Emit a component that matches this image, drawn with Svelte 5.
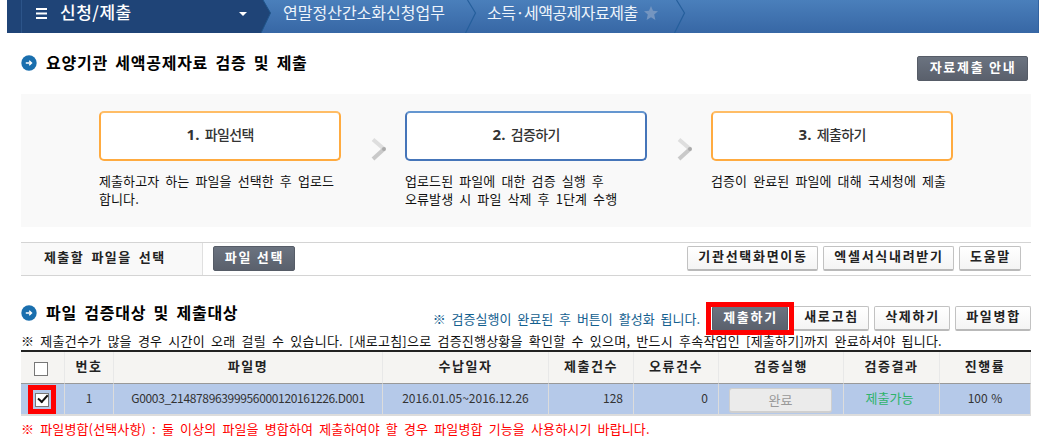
<script lang="ts">
  interface Step {
    no: number;
    title: string;
    lines: string[];
    tone: 'orange' | 'blue';
  }

  const steps: Step[] = [
    { no: 1, title: '파일선택', lines: ['제출하고자 하는 파일을 선택한 후 업로드', '합니다.'], tone: 'orange' },
    { no: 2, title: '검증하기', lines: ['업로드된 파일에 대한 검증 실행 후', '오류발생 시 파일 삭제 후 1단계 수행'], tone: 'blue' },
    { no: 3, title: '제출하기', lines: ['검증이 완료된 파일에 대해 국세청에 제출'], tone: 'orange' },
  ];

  const columns = [
    { label: '번호', width: 49 },
    { label: '파일명', width: 269 },
    { label: '수납일자', width: 166 },
    { label: '제출건수', width: 85 },
    { label: '오류건수', width: 85 },
    { label: '검증실행', width: 125 },
    { label: '검증결과', width: 96 },
    { label: '진행률', width: 91 },
  ];

  let allChecked = $state(false);
  let rowChecked = $state(true);
</script>

{#snippet bullet()}
  <svg class="bullet" width="16" height="16" viewBox="0 0 16 16" aria-hidden="true">
    <circle cx="8" cy="8" r="7.7" fill="#1a6fae" />
    <path d="M4.8 8h5.4M8.2 5.7L10.6 8 8.2 10.3" fill="none" stroke="#fff" stroke-width="1.3" />
  </svg>
{/snippet}

{#snippet divider()}
  <svg class="divider" width="12" height="33" viewBox="0 0 12 33" aria-hidden="true">
    <path d="M2.5 0L10.5 13 0.5 33" fill="none" stroke="#255f9c" stroke-width="1.2" />
  </svg>
{/snippet}

<div class="page">
  <nav class="topbar">
    <div class="menu">
      <svg width="11" height="11" viewBox="0 0 11 11" aria-hidden="true">
        <path d="M0 1h11M0 5.5h11M0 10h11" stroke="#fff" stroke-width="2" />
      </svg>
      <span>신청/제출</span>
      <svg class="caret" width="8" height="4" viewBox="0 0 8 4" aria-hidden="true">
        <path d="M0 0h8L4 4z" fill="#fff" />
      </svg>
    </div>
    <svg class="edge" width="10" height="33" viewBox="0 0 10 33" aria-hidden="true">
      <path d="M0 0H2L9.5 13 0 33z" fill="#1f4477" />
      <path d="M2 0L9.5 13 0 33" fill="none" stroke="#205489" />
    </svg>
    <span class="crumb first">연말정산간소화신청업무</span>
    {@render divider()}
    <span class="crumb second">소득·세액공제자료제출</span>
    <svg class="star" width="14" height="14" viewBox="0 0 14 14" aria-hidden="true">
      <path d="M7 0l2 4.8 5 .4-3.8 3.3L11.4 14 7 11.2 2.6 14 3.8 8.5 0 5.2l5-.4z" fill="#7495c0" />
    </svg>
    {@render divider()}
  </nav>

  <header class="title-row">
    {@render bullet()}
    <h2>요양기관 세액공제자료 검증 및 제출</h2>
    <button class="btn dark guide">자료제출 안내</button>
  </header>

  <section class="steps">
    {#each steps as step, i}
      {#if i > 0}
        <svg class="arrow" width="16" height="24" viewBox="0 0 16 24" aria-hidden="true">
          <path d="M2 2.5L13 12" stroke="#dedede" stroke-width="4" />
          <path d="M13 12L2 22" stroke="#c9c9c9" stroke-width="4" />
          <circle cx="13" cy="12" r="2" fill="#aaa" />
        </svg>
      {/if}
      <div class="step">
        <div class="step-box {step.tone}"><b>{step.no}.</b><span>{step.title}</span></div>
        {#each step.lines as line}
          <p>{line}</p>
        {/each}
      </div>
    {/each}
  </section>

  <section class="picker">
    <div class="picker-label">제출할 파일을 선택</div>
    <button class="btn dark pick">파일 선택</button>
    <div class="picker-actions">
      <button class="btn" style:width="131px">기관선택화면이동</button>
      <button class="btn" style:width="131px">엑셀서식내려받기</button>
      <button class="btn" style:width="62px">도움말</button>
    </div>
  </section>

  <header class="list-row">
    {@render bullet()}
    <h2>파일 검증대상 및 제출대상</h2>
    <span class="hint">※ 검증실행이 완료된 후 버튼이 활성화 됩니다.</span>
    <div class="list-actions">
      <div class="marked"><button class="btn dark">제출하기</button></div>
      <button class="btn">새로고침</button>
      <button class="btn">삭제하기</button>
      <button class="btn">파일병합</button>
    </div>
  </header>

  <p class="notice">※ 제출건수가 많을 경우 시간이 오래 걸릴 수 있습니다. [새로고침]으로 검증진행상황을 확인할 수 있으며, 반드시 후속작업인 [제출하기]까지 완료하셔야 됩니다.</p>

  <table>
    <colgroup>
      <col style:width="44px" />
      {#each columns as col}
        <col style:width="{col.width}px" />
      {/each}
    </colgroup>
    <thead>
      <tr>
        <th><input type="checkbox" aria-label="전체 선택" bind:checked={allChecked} /></th>
        {#each columns as col}
          <th>{col.label}</th>
        {/each}
      </tr>
    </thead>
    <tbody>
      <tr>
        <td><span class="marked-check"><input type="checkbox" aria-label="선택" bind:checked={rowChecked} /></span></td>
        <td>1</td>
        <td class="file">G0003_21487896399956000120161226.D001</td>
        <td class="date">2016.01.05~2016.12.26</td>
        <td class="num">128</td>
        <td class="num">0</td>
        <td><button class="done" disabled>완료</button></td>
        <td class="ok">제출가능</td>
        <td>100 %</td>
      </tr>
    </tbody>
  </table>

  <p class="footnote">※ 파일병합(선택사항) : 둘 이상의 파일을 병합하여 제출하여야 할 경우 파일병합 기능을 사용하시기 바랍니다.</p>
</div>

<style>
  :global(body) {
    background: #fff;
  }
  .page {
    width: 1045px;
    height: 447px;
    overflow: hidden;
    box-sizing: border-box;
    padding: 0 14px 0 21px;
    font: 13px/18px 'Noto Sans CJK KR', sans-serif;
    word-spacing: 3px;
    color: #111;
  }
  .page * {
    box-sizing: border-box;
  }
  button {
    font-family: inherit;
    word-spacing: inherit;
  }
  p,
  h2 {
    margin: 0;
    white-space: nowrap;
  }
  svg {
    display: block;
    flex: none;
  }

  .topbar {
    display: flex;
    height: 33px;
    margin: 0 -14px;
    width: 1032px;
    background: linear-gradient(#4a7fbb, #3767a5);
    border-right: 1px solid #3263a1;
    color: #eef4fb;
    font-size: 16px;
    line-height: 24px;
    white-space: nowrap;
  }
  .menu {
    display: flex;
    width: 254px;
    padding-left: 14px;
    background: linear-gradient(90deg, #1f4477 14px, #2c5489 14px, #2c5489 15px, #1f4477 15px);
    color: #fff;
    font-weight: 500;
    font-size: 17px;
    letter-spacing: 0.5px;
  }
  .menu svg:first-child {
    margin: 8px 13px 0 15px;
  }
  .menu .caret {
    margin: 12px 14px 0 auto;
  }
  .crumb.first {
    width: 183px;
    margin-left: 12px;
    margin-right: -1px;
  }
  .crumb.second {
    margin-left: 10px;
    width: 151px;
    letter-spacing: -0.5px;
  }
  .star {
    margin: 6px 16px 0 6px;
  }

  .title-row {
    display: flex;
    height: 61px;
    padding-top: 22px;
  }
  .bullet {
    margin: 0 9px 0 0;
  }
  h2 {
    margin-top: -1px;
    font-size: 16px;
    line-height: 16px;
    font-weight: 700;
    letter-spacing: 0.75px;
    color: #000;
  }
  .btn {
    height: 25px;
    padding: 0 0 4px;
    border: 1px solid #c2c2c2;
    border-bottom: 2px solid #b9b9b9;
    border-radius: 2px;
    background: linear-gradient(#fff, #f4f4f4);
    color: #222;
    font-size: 13px;
    line-height: 18px;
    font-weight: 700;
    letter-spacing: 1.7px;
    word-spacing: 0;
    text-indent: 1px;
    white-space: nowrap;
  }
  .btn.dark {
    border: 1px solid #565c67;
    background: linear-gradient(#6b7380, #5a606c);
    color: #fff;
  }
  .guide {
    width: 111px;
    margin: 1px 3px 0 auto;
  }

  .steps {
    display: flex;
    height: 133px;
    padding: 17px 0 0 77px;
    background: #f9f9f9;
  }
  .step {
    width: 243px;
    letter-spacing: 0.1px;
  }
  .step p {
    padding-left: 1px;
  }
  .step-box {
    display: flex;
    justify-content: center;
    width: 242px;
    height: 50px;
    margin: 0 0 11px 1px;
    border: 2px solid #ffab40;
    border-radius: 5px;
    background: #fff;
    font-size: 14px;
    line-height: 42px;
    font-weight: 500;
    letter-spacing: -0.7px;
    color: #333;
  }
  .step-box.orange {
    border-top-color: #ffbd66;
  }
  .step-box.blue {
    border-color: #4575b9;
    border-top-color: #6496d0;
  }
  .step-box b {
    margin-right: 5px;
    font: 700 15px/42px 'Open Sans', sans-serif;
    letter-spacing: 0.3px;
  }
  .arrow {
    margin: 26px 17px 0 30px;
  }

  .picker {
    display: flex;
    height: 34px;
    margin-top: 15px;
    border: solid #d4d4d4;
    border-width: 1px 0;
  }
  .picker-label {
    width: 182px;
    padding: 5px 0 0 23px;
    border-right: 1px solid #e0e0e0;
    background: #f9f9f9;
    font-weight: 700;
    letter-spacing: 1.4px;
    color: #222;
  }
  .pick {
    width: 82px;
    margin: 3px 0 0 10px;
  }
  .picker-actions {
    display: flex;
    gap: 5px;
    margin: 3px 10px 0 auto;
  }

  .list-row {
    display: flex;
    height: 56px;
    padding-top: 29px;
  }
  .hint {
    margin: 5px 0 0 auto;
    color: #13608f;
    white-space: nowrap;
  }
  .list-actions {
    display: flex;
    gap: 5px;
    margin-left: 12px;
  }
  .list-actions .btn {
    width: 76px;
    margin-top: 1px;
  }
  .marked {
    position: relative;
    width: 76px;
  }
  .marked::after {
    content: '';
    position: absolute;
    box-sizing: border-box;
    top: -3px;
    left: -6px;
    width: 88px;
    height: 33px;
    border: 5px solid #f00;
  }

  .notice {
    height: 18px;
    letter-spacing: 0.22px;
  }

  table {
    width: 1010px;
    table-layout: fixed;
    border-collapse: separate;
    border-spacing: 0;
    border-top: 2px solid #222;
  }
  th,
  td {
    height: 32px;
    padding: 0;
    text-align: center;
    vertical-align: top;
  }
  th {
    padding-top: 5px;
    border-right: 1px solid #e8e8e8;
    border-bottom: 1px solid #999;
    background: #f5f4f2;
    font-weight: 700;
    letter-spacing: 1.6px;
    color: #222;
  }
  td {
    padding-top: 5px;
    border-right: 1px solid #dcdcdc;
    border-bottom: 2px solid #dcdcdc;
    background: #b5c9e9;
    font: 12px/18px 'Noto Sans CJK KR', sans-serif;
    word-spacing: 1px;
    color: #333;
  }
  input {
    appearance: none;
    display: block;
    width: 14px;
    height: 14px;
    margin: 5px auto 0 13px;
    border: 1px solid #777;
    background: #fff;
  }
  input:checked::after {
    content: '';
    display: block;
    width: 4px;
    height: 8px;
    margin: 0 0 0 4px;
    border: solid #111;
    border-width: 0 2px 2px 0;
    transform: rotate(42deg) translate(-1px, -1px);
  }
  .marked-check {
    display: block;
    width: 28px;
    height: 29px;
    margin: -4px 0 0 7px;
    border: 5px solid #f00;
    overflow: hidden;
  }
  .marked-check input {
    margin: 3px 0 0 2px;
  }
  .file {
    letter-spacing: -0.35px;
  }
  .date {
    letter-spacing: 0;
  }
  .num {
    padding-right: 10px;
    text-align: right;
  }
  .done {
    display: block;
    width: 103px;
    height: 25px;
    margin: -1px auto 0 10px;
    padding: 0;
    border: 1px solid #cfcfcf;
    border-bottom-width: 2px;
    border-radius: 3px;
    background: #ebebeb;
    font-size: 13px;
    line-height: 20px;
    color: #999;
  }
  td.ok {
    padding-right: 4px;
    font-size: 13px;
    color: #2fb36b;
  }
  .footnote {
    margin-top: 4px;
    letter-spacing: 0.14px;
    color: #f00;
  }
</style>
